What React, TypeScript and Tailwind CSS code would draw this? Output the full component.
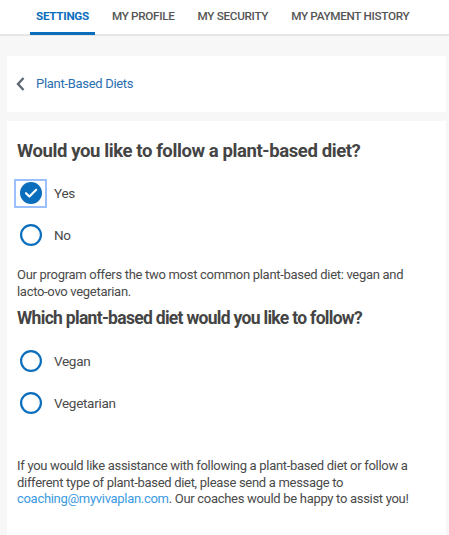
import React, { useState } from "react";

const tabs = ["SETTINGS", "MY PROFILE", "MY SECURITY", "MY PAYMENT HISTORY"];

function Radio({
  label,
  checked,
  focused,
  onClick,
}: {
  label: string;
  checked: boolean;
  focused?: boolean;
  onClick: () => void;
}) {
  return (
    <button onClick={onClick} className="flex items-center h-[42px] text-left">
      <span
        className={`flex items-center justify-center w-[29px] h-[25px] ml-[-1px] ${
          focused ? "outline-2 outline-[#9cc0fb]" : ""
        }`}
      >
        {checked ? (
          <svg width="22" height="22" viewBox="0 0 22 22">
            <circle cx="11" cy="11" r="11" fill="#0a6ebd" />
            <path d="M6 11.2l3.4 3.3L16.2 7.8" fill="none" stroke="#fff" strokeWidth="2.2" strokeLinecap="round" strokeLinejoin="round" />
          </svg>
        ) : (
          <svg width="22" height="22" viewBox="0 0 22 22">
            <circle cx="11" cy="11" r="9.9" fill="none" stroke="#0a6ebd" strokeWidth="2.2" />
          </svg>
        )}
      </span>
      <span className="ml-[9px] text-[13.5px] text-[#4a4a4a]">{label}</span>
    </button>
  );
}

export default function App() {
  const [follow, setFollow] = useState("Yes");
  const [diet, setDiet] = useState("");

  return (
    <div className="min-h-screen bg-[#f7f7f7] font-['Roboto',sans-serif] tracking-[-0.3px]">
      {/* tabs */}
      <div className="bg-white border-b-2 border-[#e6e6e6] h-[36px] flex items-start pl-[30px]">
        {tabs.map((t, i) => (
          <div
            key={t}
            className={`h-[35px] flex items-center px-[6px] mr-[11px] text-[11.7px] ${
              i === 0
                ? "text-[#0a6ebd] font-bold border-b-[3px] border-[#0a6ebd] pt-[2px]"
                : "text-[#555] font-medium pb-[1px]"
            }`}
          >
            {t}
          </div>
        ))}
      </div>

      <div className="pl-[7px] pr-[3px] pt-[20px]">
        {/* breadcrumb card */}
        <div className="bg-white h-[56px] flex items-center pl-[9px]">
          <svg width="10" height="14" viewBox="0 0 10 14" className="mr-[10px]">
            <path d="M7.5 1L2 7l5.5 6" fill="none" stroke="#5c6670" strokeWidth="2.3" />
          </svg>
          <span className="text-[13px] text-[#2a6fb0]">Plant-Based Diets</span>
        </div>

        {/* question card */}
        <div className="bg-white mt-[9px] px-[10px] pt-[18px] pb-[40px]">
          <h2 className="text-[18.5px] tracking-[-0.4px] font-bold text-[#444] leading-[24px]">
            Would you like to follow a plant-based diet?
          </h2>
          <div className="mt-[9px] flex flex-col">
            {["Yes", "No"].map((o) => (
              <Radio key={o} label={o} checked={follow === o} focused={o === "Yes"} onClick={() => setFollow(o)} />
            ))}
          </div>
          <p className="mt-[10px] text-[13px] leading-[17px] text-[#4a4a4a]">
            Our program offers the two most common plant-based diet: vegan and lacto-ovo vegetarian.
          </p>
          <h2 className="mt-[6px] text-[17.5px] tracking-[-0.7px] font-bold text-[#444] leading-[24px]">
            Which plant-based diet would you like to follow?
          </h2>
          <div className="mt-[10px] flex flex-col">
            {["Vegan", "Vegetarian"].map((o) => (
              <Radio key={o} label={o} checked={diet === o} onClick={() => setDiet(o)} />
            ))}
          </div>
          <p className="mt-[34px] text-[13px] leading-[16.5px] text-[#4a4a4a]">
            If you would like assistance with following a plant-based diet or follow a different type of
            plant-based diet, please send a message to{" "}
            <a href="#" className="text-[#3b9ae1]">coaching@myvivaplan.com</a>. Our coaches would be happy to
            assist you!
          </p>
        </div>
      </div>
    </div>
  );
}
